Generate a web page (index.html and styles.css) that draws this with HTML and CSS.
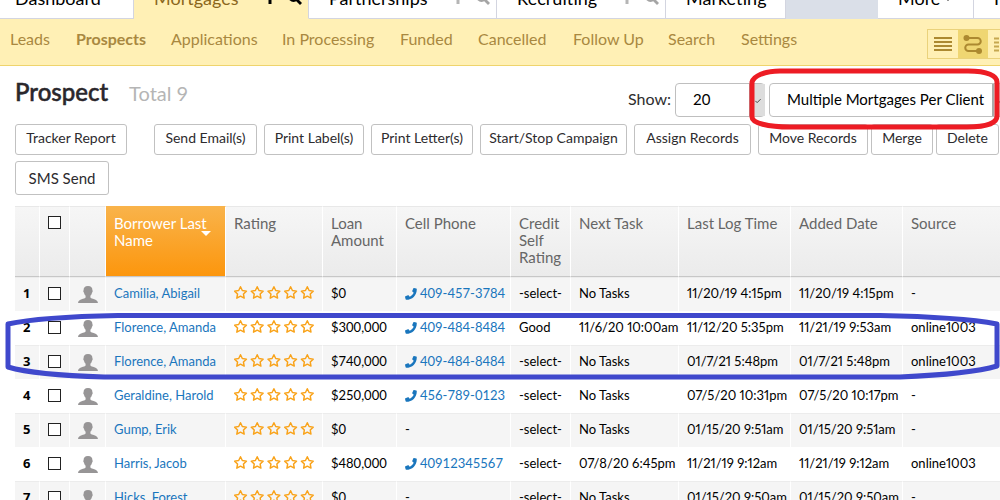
FILE: index.html
```html
<!DOCTYPE html>
<html lang="en">
<head>
<meta charset="utf-8">
<title>Prospects</title>
<link rel="stylesheet" href="styles.css">
</head>
<body>
<svg class="defs" aria-hidden="true">
  <symbol id="star" viewBox="0 0 24 24"><path d="M12 2.800l2.900 6.100 6.600.9-4.800 4.600 1.200 6.600-5.900-3.200L6.100 21l1.200-6.600-4.800-4.600 6.600-.9z" fill="none" stroke="#f9a31a" stroke-width="2.300" stroke-linejoin="round"/></symbol>
  <symbol id="stars" viewBox="0 0 82 16">
    <use href="#star" x="-1" y="0" width="15" height="15"/><use href="#star" x="15.700" y="0" width="15" height="15"/><use href="#star" x="32.400" y="0" width="15" height="15"/><use href="#star" x="49.100" y="0" width="15" height="15"/><use href="#star" x="65.800" y="0" width="15" height="15"/>
  </symbol>
  <symbol id="person" viewBox="0 0 20 17"><path d="M10 0C6.800 0 5.500 1.800 5.600 4.200c-.6.3-.3 1.800.3 2.200.3 1.500.9 2.600 1.700 3.400v1.700C6.800 13 .6 12.800 0 17h20c-.6-4.200-6.800-4-7.600-5.500V9.800c.8-.8 1.400-1.900 1.700-3.400.6-.4.9-1.900.3-2.200C14.500 1.800 13.200 0 10 0z" fill="#979596"/></symbol>
  <symbol id="phone" viewBox="0 0 24 24"><path d="M22.600 1.100L18 .1c-.6-.1-1.200.2-1.400.7l-2.200 5c-.2.500-.1 1.100.4 1.400l2.600 2.200c-1.600 3.500-4.500 6.400-8 8l-2.200-2.700c-.3-.4-.9-.6-1.400-.3l-5 2.200c-.5.200-.8.800-.7 1.400l1.100 4.600c.1.600.6 1 1.200 1C14.500 23.600 23.600 14.600 23.600 2.300c0-.6-.4-1.100-1-1.200z" fill="#1a76bd"/></symbol>
  <symbol id="search" viewBox="0 0 14 14"><circle cx="5.500" cy="5.500" r="4.200" fill="none" stroke="currentColor" stroke-width="2.400"/><path d="M8.500 8.500l4.500 4.500" stroke="currentColor" stroke-width="2.800"/></symbol>
  <symbol id="plus" viewBox="0 0 12 12"><path d="M6 0v12M0 6h12" stroke="currentColor" stroke-width="3"/></symbol>
</svg>

<header class="tabs">
  <a class="tab dashboard" href="#">Dashboard</a>
  <a class="tab mortgages active" href="#"><span>Mortgages</span><svg class="add"><use href="#plus"/></svg><svg class="find"><use href="#search"/></svg></a>
  <a class="tab partnerships" href="#"><span>Partnerships</span><svg class="add"><use href="#plus"/></svg><svg class="find"><use href="#search"/></svg></a>
  <a class="tab recruiting" href="#"><span>Recruiting</span><svg class="add"><use href="#plus"/></svg><svg class="find"><use href="#search"/></svg></a>
  <a class="tab marketing" href="#">Marketing</a>
  <span class="spacer"></span>
  <a class="tab more" href="#">More<svg class="caret" viewBox="0 0 8 5"><path d="M0 0h8L4 5z"/></svg></a>
  <a class="tab last" href="#">I</a>
</header>

<nav class="subnav">
  <a class="leads" href="#">Leads</a>
  <a class="current prospects" href="#">Prospects</a>
  <a class="applications" href="#">Applications</a>
  <a class="processing" href="#">In Processing</a>
  <a class="funded" href="#">Funded</a>
  <a class="cancelled" href="#">Cancelled</a>
  <a class="follow" href="#">Follow Up</a>
  <a class="find-link" href="#">Search</a>
  <a href="#">Settings</a>
  <div class="views">
    <button type="button" aria-label="List view"><svg width="18" height="14" viewBox="0 0 18 14"><path d="M0 1h18M0 5h18M0 9h18M0 13h18" stroke="#ac8930" stroke-width="2"/></svg></button>
    <button type="button" class="on" aria-label="Flow view"><svg width="20" height="19" viewBox="0 0 20 19"><path d="M3 3h11.500a3.200 3.200 0 0 1 0 6.500h-9a3.200 3.200 0 0 0 0 6.500H16" fill="none" stroke="#ac8930" stroke-width="2"/><circle cx="3.500" cy="3" r="3" fill="#ac8930"/><circle cx="16" cy="16" r="3" fill="#ac8930"/></svg></button>
    <button type="button" aria-label="Grid view"><svg width="18" height="15" viewBox="0 0 18 15"><path d="M0 1.500h5M0 5.500h5M0 9.500h5M0 13.500h5M7 1.500h11M7 5.500h11M7 9.500h11M7 13.500h11" stroke="#c6a850" stroke-width="2"/></svg></button>
  </div>
</nav>

<main>
  <div class="heading">
    <h1>Prospect</h1><span class="total">Total 9</span>
    <label for="show">Show:</label>
    <div class="pick small"><select id="show"><option>20</option></select><svg viewBox="0 0 16 32"><path d="M5 17l2 2 4-4" /></svg></div>
    <div class="pick"><select aria-label="Grouping"><option>Multiple Mortgages Per Client</option></select><svg viewBox="0 0 16 32"><path d="M5 17l2 2 4-4" /></svg></div>
  </div>

  <div class="actions">
    <button type="button" class="report">Tracker Report</button>
    <button type="button">Send Email(s)</button>
    <button type="button">Print Label(s)</button>
    <button type="button">Print Letter(s)</button>
    <button type="button">Start/Stop Campaign</button>
    <button type="button">Assign Records</button>
    <button type="button">Move Records</button>
    <div class="pair"><button type="button">Merge</button><button type="button">Delete</button></div>
  </div>
  <button type="button" class="sms">SMS Send</button>

  <table>
    <colgroup><col class="c-num"><col class="c-check"><col class="c-person"><col class="c-name"><col class="c-rating"><col class="c-loan"><col class="c-phone"><col class="c-credit"><col class="c-task"><col class="c-date"><col class="c-date"><col></colgroup>
    <thead>
      <tr><th></th><th><input type="checkbox" aria-label="Select all"></th><th></th><th class="sorted">Borrower Last Name</th><th>Rating</th><th>Loan Amount</th><th>Cell Phone</th><th>Credit Self Rating</th><th>Next Task</th><th>Last Log Time</th><th>Added Date</th><th>Source</th></tr>
    </thead>
    <tbody>
      <tr><td class="num">1</td><td><input type="checkbox" aria-label="Select row 1"></td><td><svg class="person"><use href="#person"/></svg></td><td><a href="#">Camilia, Abigail</a></td><td><svg class="stars"><use href="#stars"/></svg></td><td>$0</td><td><a href="#"><svg class="phone"><use href="#phone"/></svg>409-457-3784</a></td><td>-select-</td><td>No Tasks</td><td>11/20/19 4:15pm</td><td>11/20/19 4:15pm</td><td>-</td></tr>
      <tr><td class="num">2</td><td><input type="checkbox" aria-label="Select row 2"></td><td><svg class="person"><use href="#person"/></svg></td><td><a href="#">Florence, Amanda</a></td><td><svg class="stars"><use href="#stars"/></svg></td><td>$300,000</td><td><a href="#"><svg class="phone"><use href="#phone"/></svg>409-484-8484</a></td><td>Good</td><td>11/6/20 10:00am</td><td>11/12/20 5:35pm</td><td>11/21/19 9:53am</td><td>online1003</td></tr>
      <tr><td class="num">3</td><td><input type="checkbox" aria-label="Select row 3"></td><td><svg class="person"><use href="#person"/></svg></td><td><a href="#">Florence, Amanda</a></td><td><svg class="stars"><use href="#stars"/></svg></td><td>$740,000</td><td><a href="#"><svg class="phone"><use href="#phone"/></svg>409-484-8484</a></td><td>-select-</td><td>No Tasks</td><td>01/7/21 5:48pm</td><td>01/7/21 5:48pm</td><td>online1003</td></tr>
      <tr><td class="num">4</td><td><input type="checkbox" aria-label="Select row 4"></td><td><svg class="person"><use href="#person"/></svg></td><td><a href="#">Geraldine, Harold</a></td><td><svg class="stars"><use href="#stars"/></svg></td><td>$250,000</td><td><a href="#"><svg class="phone"><use href="#phone"/></svg>456-789-0123</a></td><td>-select-</td><td>No Tasks</td><td>07/5/20 10:31pm</td><td>07/5/20 10:17pm</td><td>-</td></tr>
      <tr><td class="num">5</td><td><input type="checkbox" aria-label="Select row 5"></td><td><svg class="person"><use href="#person"/></svg></td><td><a href="#">Gump, Erik</a></td><td><svg class="stars"><use href="#stars"/></svg></td><td>$0</td><td>-</td><td>-select-</td><td>No Tasks</td><td>01/15/20 9:51am</td><td>01/15/20 9:51am</td><td>-</td></tr>
      <tr><td class="num">6</td><td><input type="checkbox" aria-label="Select row 6"></td><td><svg class="person"><use href="#person"/></svg></td><td><a href="#">Harris, Jacob</a></td><td><svg class="stars"><use href="#stars"/></svg></td><td>$480,000</td><td><a href="#"><svg class="phone"><use href="#phone"/></svg>40912345567</a></td><td>-select-</td><td>07/8/20 6:45pm</td><td>11/21/19 9:12am</td><td>11/21/19 9:12am</td><td>online1003</td></tr>
      <tr><td class="num">7</td><td><input type="checkbox" aria-label="Select row 7"></td><td><svg class="person"><use href="#person"/></svg></td><td><a href="#">Hicks, Forest</a></td><td><svg class="stars"><use href="#stars"/></svg></td><td>$0</td><td>-</td><td>-select-</td><td>No Tasks</td><td>01/15/20 9:50am</td><td>01/15/20 9:50am</td><td>-</td></tr>
    </tbody>
  </table>
</main>

<svg class="marks" viewBox="0 0 1000 500" aria-hidden="true">
  <path d="M752 82c2-6 12-11 28-11h188c20 0 29 5 29 11v34c0 7-10 11-30 11H790c-22 0-38-4-38-10z" fill="none" stroke="#ed1c24" stroke-width="5" stroke-linejoin="round"/>
  <path d="M8 324Q40 317 118 315.500H880Q960 317 997 324V366Q970 374 900 377H104Q35 375 8 367Z" fill="none" stroke="#3f48cc" stroke-width="5" stroke-linejoin="round"/>
</svg>
</body>
</html>
```
FILE: styles.css
```css
* { box-sizing: border-box; }
body { margin: 0; height: 100vh; overflow: hidden; position: relative; background: #fff; color: #000; font: 13px/17px Lato, "Open Sans", sans-serif; }
a { color: inherit; text-decoration: none; }
button, select, input { font: inherit; color: inherit; margin: 0; }
.defs { position: absolute; width: 0; height: 0; }
.marks { position: absolute; left: 0; top: 0; width: 100%; pointer-events: none; }

.tabs { display: flex; align-items: flex-end; height: 19px; overflow: hidden; background: #dadfe8; font-size: 18px; line-height: 24px; }
.tab { display: flex; flex: none; align-items: center; height: 36px; padding: 0 20px 5px; background: #fff; border-right: 1px solid #d3d5e0; border-bottom: 1px solid #d3d5e0; }
.tab span { margin-right: auto; }
.dashboard { width: 134px; padding-left: 15px; }
.mortgages { width: 175px; padding-right: 6px; }
.partnerships { width: 188px; padding-right: 6px; }
.recruiting { width: 169px; padding-right: 6px; }
.marketing { width: 120px; }
.spacer { flex: none; width: 92px; }
.more { width: 96px; gap: 4px; }
.last { flex: 1; border-right: 0; padding-right: 0; }
.tab.active { background: #fff0b5; border-bottom-color: #fff0b5; color: #8b671c; }
.add { width: 12px; height: 12px; color: #b5b5b5; margin-right: 12px; }
.find { width: 14px; height: 14px; color: #a5a5a5; }
.active svg { color: #000; }
.caret { width: 8px; height: 5px; }

.subnav { display: flex; align-items: center; height: 47px; padding: 0 0 6px 10px; background: #fff0b5; border-bottom: 1px solid #efd46c; color: #a98840; font-size: 16px; line-height: 20px; white-space: nowrap; overflow: hidden; }
.subnav > a { flex: none; }
.leads { width: 66px; }
.prospects { width: 95px; }
.applications { width: 111px; }
.processing { width: 118px; }
.funded { width: 78px; }
.cancelled { width: 95px; }
.follow { width: 95px; }
.find-link { width: 73px; }
.current { font-weight: bold; }
.views { display: flex; flex: none; width: 73px; margin: 10px 0 0 auto; border: 1px solid #ead27b; border-right: 0; overflow: hidden; }
.views button { display: flex; flex: none; align-items: center; justify-content: center; width: 30px; height: 28px; padding: 0; border: 0; background: #fff0b5; }
.views .on { background: #efd672; }

main { padding: 17px 0 0 15px; }
.heading { display: flex; align-items: center; height: 34px; }
h1 { margin: 0; padding-bottom: 16px; font-size: 24px; line-height: 28px; font-weight: 500; color: #2a272c; -webkit-text-stroke: 0.5px #2a272c; }
.total { margin-left: 21px; padding-bottom: 14px; font-size: 20px; line-height: 26px; color: #b5b5b5; }
.heading label { margin-left: auto; padding: 0 4px 2px 0; font-size: 16px; line-height: 20px; color: #2d2d2d; }
.pick { position: relative; flex: none; width: 239px; height: 34px; margin-right: -8px; }
.pick.small { width: 90px; margin-right: 4px; }
.pick select { width: 100%; height: 100%; padding: 0 17px 2px; appearance: none; border: 1px solid #bfbfbf; border-radius: 4px; background: #fff; font-size: 15px; }
.pick svg { position: absolute; top: 1px; right: 0; width: 16px; height: 32px; background: #ddd; border-left: 2px solid #aaa; }
.pick path { fill: none; stroke: #333; stroke-width: 1; }

.actions { display: grid; grid-template-columns: 132px 103px 100px 102px 147px 117px 110px 129px; gap: 7px; margin-top: 7px; }
.actions button, .sms { height: 31px; padding: 0 0 4px; border: 1px solid #c1c1c1; border-radius: 3px; background: #fff; color: #2d2b2e; font-size: 14px; line-height: 18px; white-space: nowrap; }
.actions .report { width: 112px; }
.pair { display: grid; grid-template-columns: 62px 63px; gap: 3px; margin-left: -4px; }
.actions + .sms { display: block; width: 94px; height: 34px; margin: 6px 0 11px; padding: 0; font-size: 15px; }

table { width: 100%; table-layout: fixed; border-collapse: separate; border-spacing: 0; white-space: nowrap; }
.c-num { width: 25px; }
.c-check { width: 30px; }
.c-person { width: 36px; }
.c-name { width: 120px; }
.c-rating { width: 97px; }
.c-loan { width: 74px; }
.c-phone { width: 114px; }
.c-credit { width: 60px; }
.c-task { width: 108px; }
.c-date { width: 112px; }
th, td { padding: 0 0 0 8px; text-align: left; border-right: 1px solid #fff; }
th:last-child, td:last-child { border-right: 0; }
th { height: 71px; padding-top: 8px; vertical-align: top; font-size: 15px; font-weight: normal; color: #666; background: linear-gradient(#f6f6f6, #ebebeb); border-bottom: 1px solid #c7c7c7; border-top: 1px solid #e8e8e8; white-space: normal; }
.sorted { position: relative; color: #fff; background: linear-gradient(#f9b34a, #fc960d); border-top-color: #f9b34a; }
.sorted::after { content: ""; position: absolute; right: 14px; top: 24px; border: 5px solid transparent; border-top-color: #fff; border-bottom: 0; }
td { height: 34px; padding-bottom: 3px; border-top: 1px solid #fff; }
td:nth-child(n+9) { font-variant-numeric: proportional-nums; }
tbody tr:nth-child(odd) td { background: #f5f5f5; border-top-color: #ececec; }
td a { color: #1a76bd; }
.num { font-weight: bold; font-family: "Open Sans", sans-serif; }
input[type="checkbox"] { display: block; width: 13px; height: 13px; appearance: none; border: 1px solid #222; background: #fff; }
th input[type="checkbox"] { margin-top: 1px; }
.person { display: block; width: 20px; height: 17px; margin-top: 2px; }
.stars { display: block; width: 82px; height: 16px; }
.phone { width: 12px; height: 12px; margin-right: 3px; vertical-align: -2px; }
```
